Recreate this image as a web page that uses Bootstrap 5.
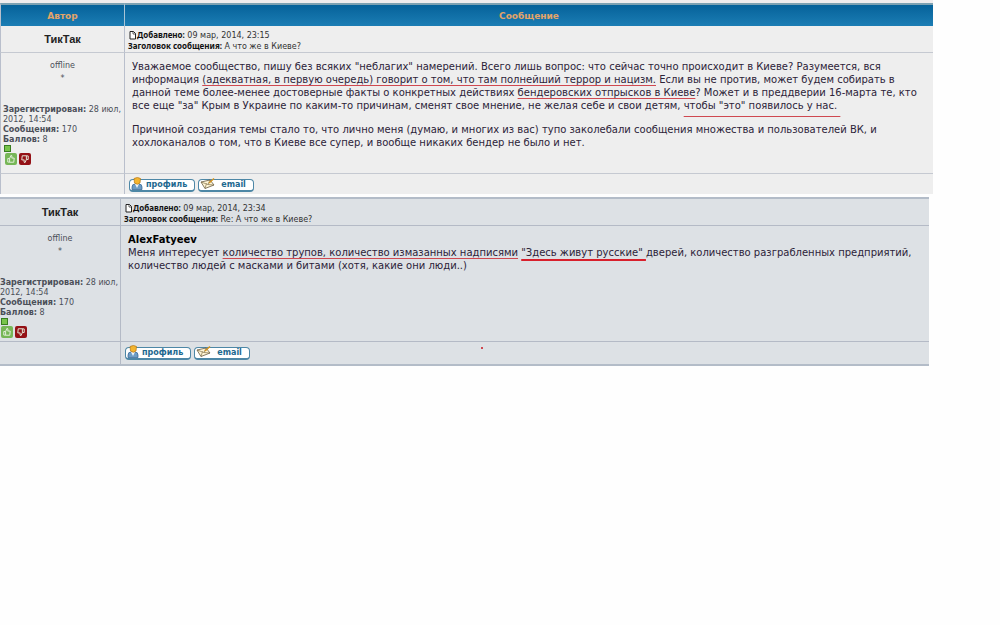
<!DOCTYPE html>
<html lang="ru">
<head>
<meta charset="utf-8">
<meta name="viewport" content="width=device-width, initial-scale=1">
<title>А что же в Киеве?</title>
<link href="https://cdn.jsdelivr.net/npm/bootstrap@5.3.0/dist/css/bootstrap.min.css" rel="stylesheet">
<style>
  body { font-family: "DejaVu Sans", Verdana, sans-serif; font-size: 10px; line-height: 13px; color: #2c2338; background: #fefefe; }
  .topic { width: 93.3%; background: #eeeeee; border-top: 3px solid #f0edee; }
  .reply { width: 92.9%; background: #dde1e5; border-top: 2px solid #b3bcc8; border-bottom: 2px solid #b3bcc8; margin-top: 3px; }
  .topic, .reply { table-layout: fixed; border-collapse: separate; border-spacing: 0; }
  .author-col { width: 125px; }
  .reply .author-col { width: 121px; }
  .topic-head th { height: 23px; padding: 0; text-align: center; color: #e3a468; font-size: 9px; line-height: 18px;
    background: linear-gradient(#06629a, #1b7db4); border-top: 2px solid #7da2b3; }
  .topic-head th:first-child { border-right: 1px solid #a9c4d6; }
  .post td, .post th { padding: 0; border-bottom: 1px solid #c5c9d1; vertical-align: top; }
  .post tr:last-child > * { border-bottom: 0; }
  .post tr > :first-child { border-right: 1px solid #b9bfcc; }
  .topic .post tr > :first-child, .topic-head th:first-child { border-left: 1px solid #b9bfcc; }
  .reply .post td, .reply .post th { border-color: #b4bac6; }
  .post .poster { height: 27px; text-align: center; vertical-align: middle; font: bold 11px/16px "Liberation Sans", Arial, sans-serif; color: #222; }
  .post .post-info { font-size: 8px; line-height: 10px; padding: 4px 3px 0; color: #333; }
  .post-info b { color: #111; font-family: "Noto Sans", sans-serif; }
  .post .profile { height: 121px; padding: 6px 2px 0; font-size: 8px; line-height: 10px; color: #4b4f58; }
  .reply .post .profile { height: 116px; padding: 6px 0 0; }
  .status { line-height: 13px; text-align: center; margin-bottom: 20px; }
  .post .message { padding: 7px 0 0 7px; white-space: nowrap; }
  .message p { margin: 0 0 11px; }
  .post .actions { height: 20px; padding: 5px 4px 0; }
  .reply .post .actions { height: 22px; }
  .pill { display: flex; align-items: center; height: 13px; padding: 0 7px 0 1px; border: 1px solid #4d87a6; border-bottom-width: 2px;
    border-radius: 4px; background: #fff; color: #1d688f; font-size: 8px; font-weight: bold; line-height: 10px; }
  .pill svg { width: 13px; height: 13px; margin: -4px 2px 0 0; flex: none; }
  .pill.mail svg { width: 16px; margin-right: 5px; }
  .vote { width: 12px; height: 12px; padding: 0; border: 0; border-radius: 2px; display: block; }
  .vote svg { display: block; }
  .up { background: #76b657; }
  .down { background: #941116; }
  .votes { gap: 2px; padding-left: 2px; }
  .reply .votes { padding-left: 1px; }
  .level { width: 7px; height: 7px; background: #77c44b; border: 1px solid #397d21; margin: 0 0 1px 1px; }
  .ul { text-decoration: underline 1px #cf4850; text-decoration-skip-ink: none; text-underline-offset: 2px; }
  .ul-low { text-underline-offset: 7px; }
  .ul-bold { text-decoration: underline 2px #d8202c; text-underline-offset: 3px; }
  .pills { gap: 3px; }
  .speck { width: 2px; height: 2px; background: #cf4850; margin-left: 228px; }
</style>
</head>
<body>
<svg class="d-none">
  <symbol id="page" viewBox="0 0 8 9"><path d="M1.500 .5H5L7 2.500v5.500H1.500z" fill="#fff" stroke="#222"/><path d="M4.500 .5v2.500H7" fill="none" stroke="#222" stroke-width=".7"/></symbol>
  <symbol id="user" viewBox="0 0 13 13"><path d="M1 12.500V10q0-3 3-3h4q3 0 3 3v2.500z" fill="#6d9cc4" stroke="#2e5f90" stroke-width=".7"/><path d="M4 7l2 4 2-4z" fill="#eef5fa"/><path d="M3 1.500Q6.500-.5 9.500 1.500L9 6Q6.500 8.500 3.500 6z" fill="#f4b52f" stroke="#b27519" stroke-width=".7"/></symbol>
  <symbol id="mail" viewBox="0 0 16 13"><path d="M1 5l9-2 4 5-9 3.500z" fill="#fff5d6" stroke="#65583f" stroke-width=".8"/><path d="M1 5l7 2.500L10 3M5 11.500l1.500-5M14 8l-6-.5" fill="none" stroke="#83714a" stroke-width=".7"/><path d="M9 6l5-4.500" stroke="#d49420" stroke-width="1.500"/></symbol>
  <symbol id="thumb" viewBox="0 0 13 13"><path d="M3 6h2l1.500-3.500q1.300 0 1 2L7.300 5.500H10l-.5 4.500H5L3 9.800zM5 6v4" fill="none" stroke="#e9f3e3"/></symbol>
</svg>

<table class="topic">
  <colgroup><col class="author-col"><col></colgroup>
  <thead class="topic-head"><tr><th scope="col">Автор</th><th scope="col">Сообщение</th></tr></thead>
  <tbody class="post">
    <tr>
      <th class="poster" scope="row">ТикТак</th>
      <td class="post-info">
        <div class="d-flex align-items-center"><svg width="9" height="9"><use href="#page"/></svg><span><b>Добавлено:</b> 09 мар, 2014, 23:15</span></div>
        <div><b>Заголовок сообщения:</b> А что же в Киеве?</div>
      </td>
    </tr>
    <tr>
      <td class="profile">
        <div class="status">offline<br>*</div>
        <b>Зарегистрирован:</b> 28 июл, 2012, 14:54<br>
        <b>Сообщения:</b> 170<br>
        <b>Баллов:</b> 8
        <div class="level"></div>
        <div class="d-flex votes">
          <button class="vote up" type="button" aria-label="За"><svg width="12" height="12"><use href="#thumb"/></svg></button>
          <button class="vote down" type="button" aria-label="Против"><svg width="12" height="12"><use href="#thumb" transform="rotate(180 6 6)"/></svg></button>
        </div>
      </td>
      <td class="message">
        <p>Уважаемое сообщество, пишу без всяких "неблагих" намерений. Всего лишь вопрос: что сейчас точно происходит в Киеве? Разумеется, вся<br>
        информация <span class="ul">(адекватная, в первую очередь) говорит о том, что там полнейший террор и нацизм.</span> Если вы не против, может будем собирать в<br>
        данной теме более-менее достоверные факты о конкретных действиях <span class="ul">бендеровских отпрысков в Киеве</span>? Может и в преддверии 16-марта те, кто<br>
        все еще "за" Крым в Украине по каким-то причинам, сменят свое мнение, не желая себе и свои детям, <span class="ul ul-low">чтобы "это" появилось у нас.&nbsp;</span></p>
        <p>Причиной создания темы стало то, что лично меня (думаю, и многих из вас) тупо заколебали сообщения множества и пользователей ВК, и<br>
        хохлоканалов о том, что в Киеве все супер, и вообще никаких бендер не было и нет.</p>
      </td>
    </tr>
    <tr>
      <td></td>
      <td class="actions"><div class="d-flex pills">
        <button class="pill" type="button"><svg><use href="#user"/></svg>профиль</button>
        <button class="pill mail" type="button"><svg><use href="#mail"/></svg>email</button>
      </div></td>
    </tr>
  </tbody>
</table>

<table class="reply">
  <colgroup><col class="author-col"><col></colgroup>
  <tbody class="post">
    <tr>
      <th class="poster" scope="row">ТикТак</th>
      <td class="post-info">
        <div class="d-flex align-items-center"><svg width="9" height="9"><use href="#page"/></svg><span><b>Добавлено:</b> 09 мар, 2014, 23:34</span></div>
        <div><b>Заголовок сообщения:</b> Re: А что же в Киеве?</div>
      </td>
    </tr>
    <tr>
      <td class="profile">
        <div class="status">offline<br>*</div>
        <b>Зарегистрирован:</b> 28 июл, 2012, 14:54<br>
        <b>Сообщения:</b> 170<br>
        <b>Баллов:</b> 8
        <div class="level"></div>
        <div class="d-flex votes">
          <button class="vote up" type="button" aria-label="За"><svg width="12" height="12"><use href="#thumb"/></svg></button>
          <button class="vote down" type="button" aria-label="Против"><svg width="12" height="12"><use href="#thumb" transform="rotate(180 6 6)"/></svg></button>
        </div>
      </td>
      <td class="message">
        <b class="text-black">AlexFatyeev</b>
        <p>Меня интересует <span class="ul">количество трупов, количество измазанных надписями</span> <span class="ul ul-bold">"Здесь живут русские" </span>дверей, количество разграбленных предприятий,<br>
        количество людей с масками и битами (хотя, какие они люди..)</p>
      </td>
    </tr>
    <tr>
      <td></td>
      <td class="actions"><div class="d-flex pills">
        <button class="pill" type="button"><svg><use href="#user"/></svg>профиль</button>
        <button class="pill mail" type="button"><svg><use href="#mail"/></svg>email</button>
        <span class="speck"></span>
      </div></td>
    </tr>
  </tbody>
</table>
<script src="https://cdn.jsdelivr.net/npm/bootstrap@5.3.0/dist/js/bootstrap.bundle.min.js"></script>
</body>
</html>
